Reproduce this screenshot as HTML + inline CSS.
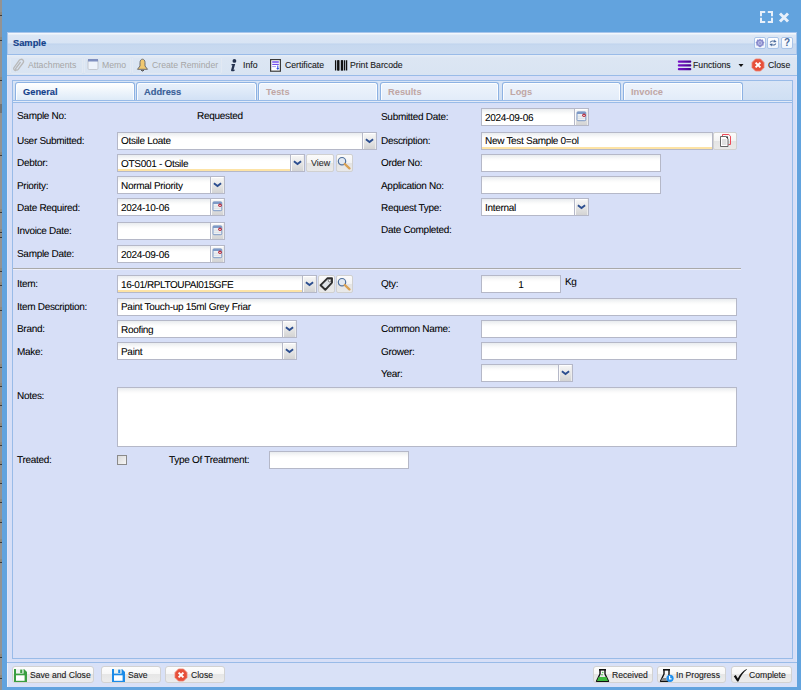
<!DOCTYPE html>
<html><head><meta charset="utf-8">
<style>
*{margin:0;padding:0;box-sizing:border-box}
html,body{width:801px;height:690px;overflow:hidden}
body{background:#62a3de;position:relative;font-family:"Liberation Sans",sans-serif;color:#000}
.a{position:absolute}
.t{position:absolute;white-space:nowrap;font-size:10px;letter-spacing:-0.3px;line-height:12px;color:#000;text-rendering:geometricPrecision;-webkit-text-stroke:0.06px #000}
.tb{position:absolute;white-space:nowrap;font-size:8.7px;line-height:12px;color:#1a1a1a;margin-top:1px;-webkit-text-stroke:0.1px #1a1a1a}
.dis{color:#a6a6a6;-webkit-text-stroke:0}
.f{position:absolute;border:1px solid #b5b8c8;background:linear-gradient(#e9ecef 0,#fbfbfb 4px,#fff 6px)}
.f span{position:absolute;left:3px;top:4px;font-size:10px;letter-spacing:-0.3px;text-rendering:geometricPrecision;line-height:12px;white-space:nowrap;color:#000;-webkit-text-stroke:0.06px #000}
.tr{position:absolute;border:1px solid #b5b8c8;background:linear-gradient(#f8f8f8,#ececec 35%,#d3d3d3)}
.tr:before{content:"";position:absolute;inset:0;border-top:1px solid #fff;border-left:1px solid #fafafa;border-right:1px solid #ececec}
.tr svg{position:absolute;left:2px;top:4px}
.btn{position:absolute;border:1px solid #d0d0d0;border-radius:2px;background:linear-gradient(#fbfbfb 0,#f3f3f3 50%,#e4e4e4 51%,#e9e9e9 100%)}
.dirty{box-shadow:inset 0 -2px 0 #fde3a5}
.tab{position:absolute;top:82px;height:18px;border:1px solid #8db2e3;border-bottom:none;border-radius:3px 3px 0 0;box-shadow:inset 1px 1px 0 rgba(255,255,255,.85),inset -1px 0 0 rgba(255,255,255,.85);background:linear-gradient(#e9f1fb,#d2e1f5)}
.tab b{position:absolute;left:7px;top:3px;font-size:9.3px;line-height:12px;color:#3a5f98;white-space:nowrap;-webkit-text-stroke:0.15px currentColor}
.tab.dt{background:linear-gradient(#eef4fc,#e2ecf9)}
.tab.dt b{color:#c0a6a4;-webkit-text-stroke:0}
.fb{position:absolute;border:1px solid #d2d2d2;border-radius:3px;background:linear-gradient(#fdfdfd 0,#f6f6f6 50%,#e6e6e6 50%,#ececec 100%)}
</style></head><body>
<!-- grey strip left -->
<div class="a" style="left:0;top:0;width:2px;height:690px;background:#939393"></div>

<div class="a" style="left:0;top:12px;width:2px;height:3px;background:#8f8a80"></div><div class="a" style="left:0;top:15px;width:2px;height:1px;background:#3a3a3a"></div><div class="a" style="left:0;top:37px;width:2px;height:3px;background:#8f8a80"></div><div class="a" style="left:0;top:40px;width:2px;height:1px;background:#3a3a3a"></div><div class="a" style="left:0;top:77px;width:2px;height:3px;background:#8f8a80"></div><div class="a" style="left:0;top:80px;width:2px;height:1px;background:#3a3a3a"></div><div class="a" style="left:0;top:152px;width:2px;height:3px;background:#8f8a80"></div><div class="a" style="left:0;top:155px;width:2px;height:1px;background:#3a3a3a"></div><div class="a" style="left:0;top:209px;width:2px;height:3px;background:#8f8a80"></div><div class="a" style="left:0;top:212px;width:2px;height:1px;background:#3a3a3a"></div><div class="a" style="left:0;top:229px;width:2px;height:3px;background:#8f8a80"></div><div class="a" style="left:0;top:232px;width:2px;height:1px;background:#3a3a3a"></div><div class="a" style="left:0;top:234px;width:2px;height:3px;background:#8f8a80"></div><div class="a" style="left:0;top:237px;width:2px;height:1px;background:#3a3a3a"></div><div class="a" style="left:0;top:268px;width:2px;height:3px;background:#8f8a80"></div><div class="a" style="left:0;top:271px;width:2px;height:1px;background:#3a3a3a"></div><div class="a" style="left:0;top:282px;width:2px;height:3px;background:#8f8a80"></div><div class="a" style="left:0;top:285px;width:2px;height:1px;background:#3a3a3a"></div><div class="a" style="left:0;top:307px;width:2px;height:3px;background:#8f8a80"></div><div class="a" style="left:0;top:310px;width:2px;height:1px;background:#3a3a3a"></div><div class="a" style="left:0;top:364px;width:2px;height:3px;background:#8f8a80"></div><div class="a" style="left:0;top:367px;width:2px;height:1px;background:#3a3a3a"></div><div class="a" style="left:0;top:383px;width:2px;height:3px;background:#8f8a80"></div><div class="a" style="left:0;top:386px;width:2px;height:1px;background:#3a3a3a"></div><div class="a" style="left:0;top:402px;width:2px;height:3px;background:#8f8a80"></div><div class="a" style="left:0;top:405px;width:2px;height:1px;background:#3a3a3a"></div><div class="a" style="left:0;top:423px;width:2px;height:3px;background:#8f8a80"></div><div class="a" style="left:0;top:426px;width:2px;height:1px;background:#3a3a3a"></div><div class="a" style="left:0;top:442px;width:2px;height:3px;background:#8f8a80"></div><div class="a" style="left:0;top:445px;width:2px;height:1px;background:#3a3a3a"></div><div class="a" style="left:0;top:461px;width:2px;height:3px;background:#8f8a80"></div><div class="a" style="left:0;top:464px;width:2px;height:1px;background:#3a3a3a"></div><div class="a" style="left:0;top:480px;width:2px;height:3px;background:#8f8a80"></div><div class="a" style="left:0;top:483px;width:2px;height:1px;background:#3a3a3a"></div><div class="a" style="left:0;top:499px;width:2px;height:3px;background:#8f8a80"></div><div class="a" style="left:0;top:502px;width:2px;height:1px;background:#3a3a3a"></div><div class="a" style="left:0;top:519px;width:2px;height:3px;background:#8f8a80"></div><div class="a" style="left:0;top:522px;width:2px;height:1px;background:#3a3a3a"></div><div class="a" style="left:0;top:539px;width:2px;height:3px;background:#8f8a80"></div><div class="a" style="left:0;top:542px;width:2px;height:1px;background:#3a3a3a"></div><div class="a" style="left:0;top:559px;width:2px;height:3px;background:#8f8a80"></div><div class="a" style="left:0;top:562px;width:2px;height:1px;background:#3a3a3a"></div><div class="a" style="left:0;top:654px;width:2px;height:3px;background:#8f8a80"></div><div class="a" style="left:0;top:657px;width:2px;height:1px;background:#3a3a3a"></div><div class="a" style="left:0;top:675px;width:2px;height:3px;background:#8f8a80"></div><div class="a" style="left:0;top:678px;width:2px;height:1px;background:#3a3a3a"></div><div class="a" style="left:0;top:104px;width:2px;height:9px;background:#747474"></div>
<!-- window icons -->
<svg class="a" style="left:760px;top:11px" width="13" height="12" viewBox="0 0 13 12"><path d="M1 5.2V1H5.2M7.8 1H12V5.2M12 6.8V11H7.8M5.2 11H1V6.8" fill="none" stroke="#e8f0fa" stroke-width="2"/></svg>
<svg class="a" style="left:778px;top:12px" width="12" height="11" viewBox="0 0 12 11"><path d="M2 1.5L10 9.5M10 1.5L2 9.5" stroke="#e8f0fa" stroke-width="2.9"/></svg>

<!-- panel -->
<div class="a" style="left:7px;top:32px;width:790px;height:655px;background:#d7dff7;border-left:1px solid #e0e5f8;border-right:1px solid #e0e5f8;border-bottom:1px solid #e0e5f8"></div>
<!-- header -->
<div class="a" style="left:7px;top:32px;width:790px;height:23px;background:linear-gradient(#f3f7fc 0,#f3f7fc 1px,#dce7f5 2px,#d8e4f4 10px,#bfd3ed 11px,#c6d8ef 12px,#c9daf0 21px);border:1px solid #a8c6ec;border-bottom:1px solid #99bbe8"></div>
<div class="a" style="left:13px;top:37px;font-size:9.3px;font-weight:bold;color:#15428b;line-height:12px;-webkit-text-stroke:0.2px #15428b">Sample</div>
<!-- header tools -->
<div class="a" style="left:754px;top:37px;width:12px;height:12px;border:1px solid #aac4e8;border-radius:2px;background:linear-gradient(#fff,#eef4fc)"></div>
<div class="a" style="left:767px;top:37px;width:12px;height:12px;border:1px solid #aac4e8;border-radius:2px;background:linear-gradient(#fff,#eef4fc)"></div>
<div class="a" style="left:781px;top:37px;width:12px;height:12px;border:1px solid #aac4e8;border-radius:2px;background:linear-gradient(#fff,#eef4fc)"></div>
<svg class="a" style="left:755px;top:38px" width="10" height="10" viewBox="0 0 10 10"><path d="M5 0.8L6.3 1.8 7.9 1.6 8.3 3.2 9.4 4.4 8.6 5.8 8.6 7.4 7 7.7 6 9 5 9.2 4 9 3 7.7 1.4 7.4 1.4 5.8 0.6 4.4 1.7 3.2 2.1 1.6 3.7 1.8Z" fill="#8a8ccc"/><circle cx="5" cy="5" r="2.1" fill="#b9bde8"/><circle cx="5" cy="5" r="0.7" fill="#6a6cae"/></svg>
<svg class="a" style="left:768px;top:38px" width="10" height="10" viewBox="0 0 10 10"><path d="M1.8 4.6C2.2 2.8 4.2 2 6.2 2.8L6.4 1.4 8.6 3.9 5.4 4.6 5.9 3.7C4.5 3.2 3.2 3.6 2.8 4.6Z" fill="#4a6a9c"/><path d="M8.2 5.4C7.8 7.2 5.8 8 3.8 7.2L3.6 8.6 1.4 6.1 4.6 5.4 4.1 6.3C5.5 6.8 6.8 6.4 7.2 5.4Z" fill="#4a6a9c"/></svg>
<div class="a" style="left:784px;top:37px;font-size:10px;font-weight:bold;color:#4a6a9c;line-height:12px">?</div>

<!-- toolbar -->
<div class="a" style="left:7px;top:55px;width:790px;height:21px;background:linear-gradient(#e7eef8 0,#dce6f3 3px,#d9e4f2 100%);border-bottom:1px solid #99bbe8"></div>


<!-- toolbar items -->
<div class="a" style="left:10px;top:57px;width:73px;height:17px;border:1px solid #e2e9f3;border-radius:2px"></div>
<svg class="a" style="left:12px;top:58px" width="13" height="14" viewBox="0 0 13 14"><path d="M4 12.5C2.3 12.5 1.2 11 2 9.6L7.4 2.2C8.3 1 10 1 10.9 2 11.8 3 11.6 4.2 10.9 5L6 11.6C5.4 12.4 4.5 12.3 4 11.8 3.5 11.3 3.6 10.6 4.1 10L8.6 4" fill="none" stroke="#b9b9b9" stroke-width="1.3"/></svg>
<div class="tb dis" style="left:28px;top:58px">Attachments</div>
<div class="a" style="left:84px;top:57px;width:47px;height:17px;border:1px solid #e2e9f3;border-radius:2px"></div>
<svg class="a" style="left:87px;top:58px" width="12" height="13" viewBox="0 0 12 13"><rect x="1" y="1.5" width="10" height="10" rx="1.2" fill="#eef3fb" stroke="#c3c7cf" stroke-width="1"/><rect x="1" y="1" width="10" height="2.5" fill="#7f8fbf"/></svg>
<div class="tb dis" style="left:102px;top:58px">Memo</div>
<div class="a" style="left:132px;top:57px;width:90px;height:17px;border:1px solid #e2e9f3;border-radius:2px"></div>
<svg class="a" style="left:136px;top:58px" width="13" height="14" viewBox="0 0 13 14"><path d="M6.5 1.2C5 1.2 4 2.6 4 4.5V8L1.5 11.3H11.5L9 8V4.5C9 2.6 8 1.2 6.5 1.2Z" fill="#f0c870" stroke="#6d6d6d" stroke-width="1"/><path d="M5 12.2Q6.5 14 8 12.2" fill="#555" stroke="#555" stroke-width="1"/></svg>
<div class="tb dis" style="left:152px;top:58px">Create Reminder</div>
<svg class="a" style="left:229px;top:58px" width="9" height="14" viewBox="0 0 9 14"><circle cx="5.4" cy="2.9" r="1.9" fill="#24324f"/><path d="M2.6 6H6.2L4.6 11.4C4.5 11.9 4.9 12 5.8 11.5L5.6 12.7C4 13.6 1.7 13.7 2.1 11.9L3.4 7.2H2.4Z" fill="#24324f"/></svg>
<div class="tb" style="left:243px;top:58px">Info</div>
<svg class="a" style="left:269px;top:58px" width="13" height="14" viewBox="0 0 13 14"><rect x="1.6" y="1.6" width="9.8" height="11.6" fill="#fff" stroke="#3a3a3a" stroke-width="1.2"/><path d="M3.2 4H9.8" stroke="#5b32e6" stroke-width="1.3"/><path d="M3.2 6.4H9.8" stroke="#6a44ee" stroke-width="1.1"/><path d="M3.2 8.6H7" stroke="#9c8cf0" stroke-width="0.9"/><path d="M8.8 7.6V11.2" stroke="#3550e0" stroke-width="1.1"/><path d="M7.2 10L8.8 11.8 10.4 10Z" fill="#3550e0"/></svg>
<div class="tb" style="left:285px;top:58px">Certificate</div>
<svg class="a" style="left:334px;top:59px" width="14" height="13" viewBox="0 0 14 13"><path d="M1.6 1.2V11.6M4.3 1.2V11.6M8 1.2V11.6M10.6 1.2V11.6M12.6 1.2V11.6" stroke="#111" stroke-width="1.3"/><path d="M4.3 1.2V11.6M8 1.2V11.6" stroke="#111" stroke-width="2.4"/></svg>
<div class="tb" style="left:350px;top:58px">Print Barcode</div>
<svg class="a" style="left:677px;top:60px" width="15" height="11" viewBox="0 0 15 11"><defs><linearGradient id="pg" x1="0" x2="1"><stop offset="0" stop-color="#7a10c8"/><stop offset="1" stop-color="#44008c"/></linearGradient></defs><rect x="0.8" y="0.5" width="13.5" height="2.2" rx="1" fill="url(#pg)"/><rect x="0.8" y="4.2" width="13.5" height="2.2" rx="1" fill="url(#pg)"/><rect x="0.8" y="8" width="13.5" height="2.2" rx="1" fill="url(#pg)"/></svg>
<div class="tb" style="left:693px;top:58px">Functions</div>
<svg class="a" style="left:738px;top:63px" width="6" height="5" viewBox="0 0 6 5"><path d="M0.5 1H5.5L3 4Z" fill="#111"/></svg>
<svg class="a" style="left:751px;top:58px" width="14" height="14" viewBox="0 0 14 14"><path d="M4.5 1H9.5L13 4.5V9.5L9.5 13H4.5L1 9.5V4.5Z" fill="#e6503a" stroke="#f08070" stroke-width="0.8"/><path d="M4.6 4.6L9.4 9.4M9.4 4.6L4.6 9.4" stroke="#fff" stroke-width="2"/></svg>
<div class="tb" style="left:768px;top:58px">Close</div>

<!-- tab panel -->
<div class="a" style="left:12px;top:80px;width:781px;height:579px;border:1px solid #99bbe8;background:#d7dff7"></div>
<div class="a" style="left:13px;top:81px;width:779px;height:19px;background:linear-gradient(#d9e5f6,#cfdff3)"></div>

<div class="tab" style="left:15px;width:120px;background:linear-gradient(#ffffff,#deebf8);border-color:#8db2e3"><b style="color:#15428b">General</b></div>
<div class="tab" style="left:136px;width:121px"><b>Address</b></div>
<div class="tab dt" style="left:258px;width:120px"><b>Tests</b></div>
<div class="tab dt" style="left:380px;width:119px"><b>Results</b></div>
<div class="tab dt" style="left:502px;width:119px"><b>Logs</b></div>
<div class="tab dt" style="left:623px;width:120px"><b>Invoice</b></div>
<div class="a" style="left:13px;top:100px;width:779px;height:3px;background:#e2eaf8;border-top:1px solid #99bbe8;border-bottom:1px solid #99bbe8"></div>


<!-- form -->
<div class="t" style="left:17px;top:111px">Sample No:</div>
<div class="t" style="left:197px;top:111px">Requested</div>
<div class="t" style="left:17px;top:136px">User Submitted:</div>
<div class="f" style="left:117px;top:132px;width:246px;height:18px"><span style="top:3px;">Otsile Loate</span></div>
<div class="tr" style="left:362px;top:132px;width:15px;height:18px"></div>
<svg class="a" style="left:365px;top:138px" width="9" height="6" viewBox="0 0 9 6"><path d="M0.9 1.2L4.5 4L8.1 1.2" fill="none" stroke="#2b4d8f" stroke-width="1.8"/></svg>
<div class="t" style="left:17px;top:158px">Debtor:</div>
<div class="f dirty" style="left:117px;top:154px;width:174px;height:18px"><span style="">OTS001 - Otsile</span></div>
<div class="tr" style="left:290px;top:154px;width:15px;height:18px"></div>
<svg class="a" style="left:293px;top:160px" width="9" height="6" viewBox="0 0 9 6"><path d="M0.9 1.2L4.5 4L8.1 1.2" fill="none" stroke="#2b4d8f" stroke-width="1.8"/></svg>
<div class="btn" style="left:306px;top:154px;width:28px;height:18px"></div>
<div class="tb" style="left:311px;top:156px;font-size:9px;color:#333">View</div>
<div class="btn" style="left:336px;top:154px;width:17px;height:18px"></div>
<svg class="a" style="left:337px;top:156px" width="14" height="14" viewBox="0 0 14 14"><circle cx="5" cy="5.2" r="3.7" fill="#e2e9f2" stroke="#4f6f9c" stroke-width="1.2"/><path d="M7.8 8L12.4 12.4" stroke="#d9a052" stroke-width="2.3" stroke-linecap="round"/></svg>
<div class="t" style="left:17px;top:181px">Priority:</div>
<div class="f" style="left:117px;top:176px;width:94px;height:18px"><span style="">Normal Priority</span></div>
<div class="tr" style="left:210px;top:176px;width:15px;height:18px"></div>
<svg class="a" style="left:213px;top:182px" width="9" height="6" viewBox="0 0 9 6"><path d="M0.9 1.2L4.5 4L8.1 1.2" fill="none" stroke="#2b4d8f" stroke-width="1.8"/></svg>
<div class="t" style="left:17px;top:203px">Date Required:</div>
<div class="f" style="left:117px;top:198px;width:94px;height:18px"><span style="">2024-10-06</span></div>
<div class="tr" style="left:210px;top:198px;width:15px;height:18px"></div>
<svg class="a" style="left:212px;top:201px" width="11" height="11" viewBox="0 0 11 11"><rect x="1" y="0.9" width="8.8" height="8.8" rx="0.9" fill="#eef1f4" stroke="#7d99c6" stroke-width="1"/><rect x="1" y="0.9" width="8.8" height="2.1" fill="#7d99c6"/><path d="M2 5.2H6M2 7.3H8.8" stroke="#d6dbe2" stroke-width="0.8"/><circle cx="8" cy="4.3" r="1.8" fill="#b52535"/><path d="M7.1 4.4H8.9" stroke="#fff" stroke-width="0.8"/></svg>
<div class="t" style="left:17px;top:226px">Invoice Date:</div>
<div class="f" style="left:117px;top:222px;width:94px;height:18px"></div>
<div class="tr" style="left:210px;top:222px;width:15px;height:18px"></div>
<svg class="a" style="left:212px;top:225px" width="11" height="11" viewBox="0 0 11 11"><rect x="1" y="0.9" width="8.8" height="8.8" rx="0.9" fill="#eef1f4" stroke="#7d99c6" stroke-width="1"/><rect x="1" y="0.9" width="8.8" height="2.1" fill="#7d99c6"/><path d="M2 5.2H6M2 7.3H8.8" stroke="#d6dbe2" stroke-width="0.8"/><circle cx="8" cy="4.3" r="1.8" fill="#b52535"/><path d="M7.1 4.4H8.9" stroke="#fff" stroke-width="0.8"/></svg>
<div class="t" style="left:17px;top:249px">Sample Date:</div>
<div class="f" style="left:117px;top:245px;width:94px;height:18px"><span style="">2024-09-06</span></div>
<div class="tr" style="left:210px;top:245px;width:15px;height:18px"></div>
<svg class="a" style="left:212px;top:248px" width="11" height="11" viewBox="0 0 11 11"><rect x="1" y="0.9" width="8.8" height="8.8" rx="0.9" fill="#eef1f4" stroke="#7d99c6" stroke-width="1"/><rect x="1" y="0.9" width="8.8" height="2.1" fill="#7d99c6"/><path d="M2 5.2H6M2 7.3H8.8" stroke="#d6dbe2" stroke-width="0.8"/><circle cx="8" cy="4.3" r="1.8" fill="#b52535"/><path d="M7.1 4.4H8.9" stroke="#fff" stroke-width="0.8"/></svg>
<div class="t" style="left:381px;top:112px">Submitted Date:</div>
<div class="f" style="left:481px;top:108px;width:94px;height:18px"><span style="">2024-09-06</span></div>
<div class="tr" style="left:574px;top:108px;width:15px;height:18px"></div>
<svg class="a" style="left:576px;top:111px" width="11" height="11" viewBox="0 0 11 11"><rect x="1" y="0.9" width="8.8" height="8.8" rx="0.9" fill="#eef1f4" stroke="#7d99c6" stroke-width="1"/><rect x="1" y="0.9" width="8.8" height="2.1" fill="#7d99c6"/><path d="M2 5.2H6M2 7.3H8.8" stroke="#d6dbe2" stroke-width="0.8"/><circle cx="8" cy="4.3" r="1.8" fill="#b52535"/><path d="M7.1 4.4H8.9" stroke="#fff" stroke-width="0.8"/></svg>
<div class="t" style="left:381px;top:136px">Description:</div>
<div class="f dirty" style="left:481px;top:132px;width:232px;height:18px"><span style="top:3px;">New Test Sample 0=ol</span></div>
<div class="btn" style="left:713px;top:132px;width:24px;height:18px"></div>
<svg class="a" style="left:719px;top:133px" width="13" height="15" viewBox="0 0 13 15"><path d="M3.5 3V1.5H9.8L11.5 3.2V11.5H9.5" fill="none" stroke="#ec4a5a" stroke-width="1"/><path d="M1.5 3.5H6.8L9 5.7V13.5H1.5Z" fill="#fff" stroke="#555" stroke-width="0.9"/><path d="M6.5 3.5L9 6V3.5Z" fill="#3a3a3a"/><path d="M3 7H7.5M3 9H7.5M3 11H7.5" stroke="#9a9a9a" stroke-width="0.6"/></svg>
<div class="t" style="left:381px;top:158px">Order No:</div>
<div class="f" style="left:481px;top:154px;width:180px;height:18px"></div>
<div class="t" style="left:381px;top:181px">Application No:</div>
<div class="f" style="left:481px;top:176px;width:180px;height:18px"></div>
<div class="t" style="left:381px;top:203px">Request Type:</div>
<div class="f" style="left:481px;top:198px;width:94px;height:18px"><span style="">Internal</span></div>
<div class="tr" style="left:574px;top:198px;width:15px;height:18px"></div>
<svg class="a" style="left:577px;top:204px" width="9" height="6" viewBox="0 0 9 6"><path d="M0.9 1.2L4.5 4L8.1 1.2" fill="none" stroke="#2b4d8f" stroke-width="1.8"/></svg>
<div class="t" style="left:381px;top:225px">Date Completed:</div>
<div class="a" style="left:13px;top:268px;width:728px;height:1px;background:#a9a9a9"></div>
<div class="a" style="left:13px;top:269px;width:728px;height:1px;background:#eef0fb"></div>
<div class="t" style="left:17px;top:279px">Item:</div>
<div class="f dirty" style="left:117px;top:275px;width:186px;height:18px"><span style=""><i style="font-style:normal;letter-spacing:-0.4px">16-01/RPLTOUPAI015GFE</i></span></div>
<div class="tr" style="left:302px;top:275px;width:15px;height:18px"></div>
<svg class="a" style="left:305px;top:281px" width="9" height="6" viewBox="0 0 9 6"><path d="M0.9 1.2L4.5 4L8.1 1.2" fill="none" stroke="#2b4d8f" stroke-width="1.8"/></svg>
<div class="btn" style="left:318px;top:275px;width:17px;height:18px"></div>
<div class="btn" style="left:336px;top:275px;width:17px;height:18px"></div>
<svg class="a" style="left:319px;top:276px" width="15" height="16" viewBox="0 0 15 16"><path d="M8.6 2.2H13V6.6L6.3 13.8L1.6 9.2Z" fill="#dfe3e7" stroke="#2e2e2e" stroke-width="1.9" stroke-linejoin="round"/><circle cx="10.6" cy="4.6" r="1.3" fill="#fff" stroke="#2e2e2e" stroke-width="0.6"/></svg>
<svg class="a" style="left:337px;top:277px" width="14" height="14" viewBox="0 0 14 14"><circle cx="5" cy="5.2" r="3.7" fill="#e2e9f2" stroke="#4f6f9c" stroke-width="1.2"/><path d="M7.8 8L12.4 12.4" stroke="#d9a052" stroke-width="2.3" stroke-linecap="round"/></svg>
<div class="t" style="left:381px;top:279px">Qty:</div>
<div class="f" style="left:481px;top:275px;width:80px;height:18px"><span style="left:0;width:100%;text-align:center;">1</span></div>
<div class="t" style="left:565px;top:277px">Kg</div>
<div class="t" style="left:17px;top:302px">Item Description:</div>
<div class="f" style="left:117px;top:298px;width:620px;height:18px"><span style="top:3px;">Paint Touch-up 15ml Grey Friar</span></div>
<div class="t" style="left:17px;top:324px">Brand:</div>
<div class="f" style="left:117px;top:320px;width:166px;height:18px"><span style="">Roofing</span></div>
<div class="tr" style="left:282px;top:320px;width:15px;height:18px"></div>
<svg class="a" style="left:285px;top:326px" width="9" height="6" viewBox="0 0 9 6"><path d="M0.9 1.2L4.5 4L8.1 1.2" fill="none" stroke="#2b4d8f" stroke-width="1.8"/></svg>
<div class="t" style="left:381px;top:324px">Common Name:</div>
<div class="f" style="left:481px;top:320px;width:256px;height:18px"></div>
<div class="t" style="left:17px;top:347px">Make:</div>
<div class="f" style="left:117px;top:342px;width:166px;height:18px"><span style="">Paint</span></div>
<div class="tr" style="left:282px;top:342px;width:15px;height:18px"></div>
<svg class="a" style="left:285px;top:348px" width="9" height="6" viewBox="0 0 9 6"><path d="M0.9 1.2L4.5 4L8.1 1.2" fill="none" stroke="#2b4d8f" stroke-width="1.8"/></svg>
<div class="t" style="left:381px;top:347px">Grower:</div>
<div class="f" style="left:481px;top:342px;width:256px;height:18px"></div>
<div class="t" style="left:381px;top:369px">Year:</div>
<div class="f" style="left:481px;top:364px;width:78px;height:18px"></div>
<div class="tr" style="left:558px;top:364px;width:15px;height:18px"></div>
<svg class="a" style="left:561px;top:370px" width="9" height="6" viewBox="0 0 9 6"><path d="M0.9 1.2L4.5 4L8.1 1.2" fill="none" stroke="#2b4d8f" stroke-width="1.8"/></svg>
<div class="t" style="left:17px;top:391px">Notes:</div>
<div class="f" style="left:117px;top:387px;width:620px;height:60px"></div>
<div class="t" style="left:17px;top:455px">Treated:</div>
<div class="a" style="left:117px;top:455px;width:10px;height:10px;border:1px solid #8a8a8a;background:linear-gradient(135deg,#dadada,#f6f6f6)"></div>
<div class="t" style="left:169px;top:455px">Type Of Treatment:</div>
<div class="f" style="left:269px;top:451px;width:140px;height:18px"></div>
<!-- /form -->
<!-- footer -->
<div class="a" style="left:7px;top:662px;width:790px;height:1px;background:#99bbe8"></div>
<div class="a" style="left:7px;top:663px;width:790px;height:24px;background:#d9e1f7;border-left:1px solid #eef2fb"></div>

<!-- fbtns -->
<div class="fb" style="left:12px;top:666px;width:82px;height:17px"></div>
<svg class="a" style="left:13px;top:668px" width="15" height="15" viewBox="0 0 15 15"><path d="M1 1H11L14 4V14H1Z" fill="#3a9e40"/><rect x="3" y="1" width="7.6" height="4.6" fill="#eef3f0"/><rect x="7.2" y="1.6" width="2.1" height="3.4" fill="#3a9e40"/><rect x="3" y="7.3" width="8.6" height="5.5" fill="#fff"/></svg>
<div class="tb" style="left:30px;top:668px;font-size:8.6px">Save and Close</div>
<div class="fb" style="left:101px;top:666px;width:60px;height:17px"></div>
<svg class="a" style="left:111px;top:668px" width="15" height="15" viewBox="0 0 15 15"><path d="M1 1H11L14 4V14H1Z" fill="#1c8be8"/><rect x="3" y="1" width="7.6" height="4.6" fill="#eef3f0"/><rect x="7.2" y="1.6" width="2.1" height="3.4" fill="#1c8be8"/><rect x="3" y="7.3" width="8.6" height="5.5" fill="#fff"/></svg>
<div class="tb" style="left:128px;top:668px;font-size:8.6px">Save</div>
<div class="fb" style="left:165px;top:666px;width:60px;height:17px"></div>
<svg class="a" style="left:174px;top:668px" width="14" height="14" viewBox="0 0 14 14"><path d="M4.5 1H9.5L13 4.5V9.5L9.5 13H4.5L1 9.5V4.5Z" fill="#e6503a" stroke="#f08070" stroke-width="0.8"/><path d="M4.6 4.6L9.4 9.4M9.4 4.6L4.6 9.4" stroke="#fff" stroke-width="2"/></svg>
<div class="tb" style="left:191px;top:668px;font-size:8.6px">Close</div>
<div class="fb" style="left:593px;top:666px;width:60px;height:17px"></div>
<svg class="a" style="left:595px;top:668px" width="15" height="15" viewBox="0 0 15 15"><path d="M5 2V6L1.5 13.2H13.5L10 6V2" fill="none" stroke="#111" stroke-width="1.4" stroke-linejoin="round"/><path d="M4 1.8H11" stroke="#111" stroke-width="1.6"/><path d="M3.6 9H11.4L13 13H2Z" fill="#3dba3d"/><circle cx="7" cy="6.8" r="0.8" fill="#3dba3d"/><circle cx="7.8" cy="4.5" r="0.7" fill="#3dba3d"/></svg>
<div class="tb" style="left:612px;top:668px;font-size:8.6px">Received</div>
<div class="fb" style="left:657px;top:666px;width:69px;height:17px"></div>
<svg class="a" style="left:659px;top:668px" width="16" height="15" viewBox="0 0 16 15"><path d="M5 2V6L1.5 13.2H9L10 6V2" fill="none" stroke="#111" stroke-width="1.4" stroke-linejoin="round"/><path d="M4 1.8H11" stroke="#111" stroke-width="1.6"/><path d="M3 10H7L8 13H2Z" fill="#888"/><circle cx="11" cy="10.3" r="3.6" fill="#1e90f0"/><path d="M10.6 8V10.8H12.6" fill="none" stroke="#fff" stroke-width="1.2"/></svg>
<div class="tb" style="left:676px;top:668px;font-size:8.6px">In Progress</div>
<div class="fb" style="left:731px;top:666px;width:61px;height:17px"></div>
<svg class="a" style="left:733px;top:668px" width="15" height="15" viewBox="0 0 15 15"><path d="M0.8 8.2L2.8 7 4.8 10.4C7 6.2 9.6 3.2 13.6 1L13.9 1.6C10.4 4.2 7.6 8.2 5.4 13.6H4.2Z" fill="#111"/></svg>
<div class="tb" style="left:749px;top:668px;font-size:8.6px">Complete</div>
<!-- /fbtns -->
</body></html>
